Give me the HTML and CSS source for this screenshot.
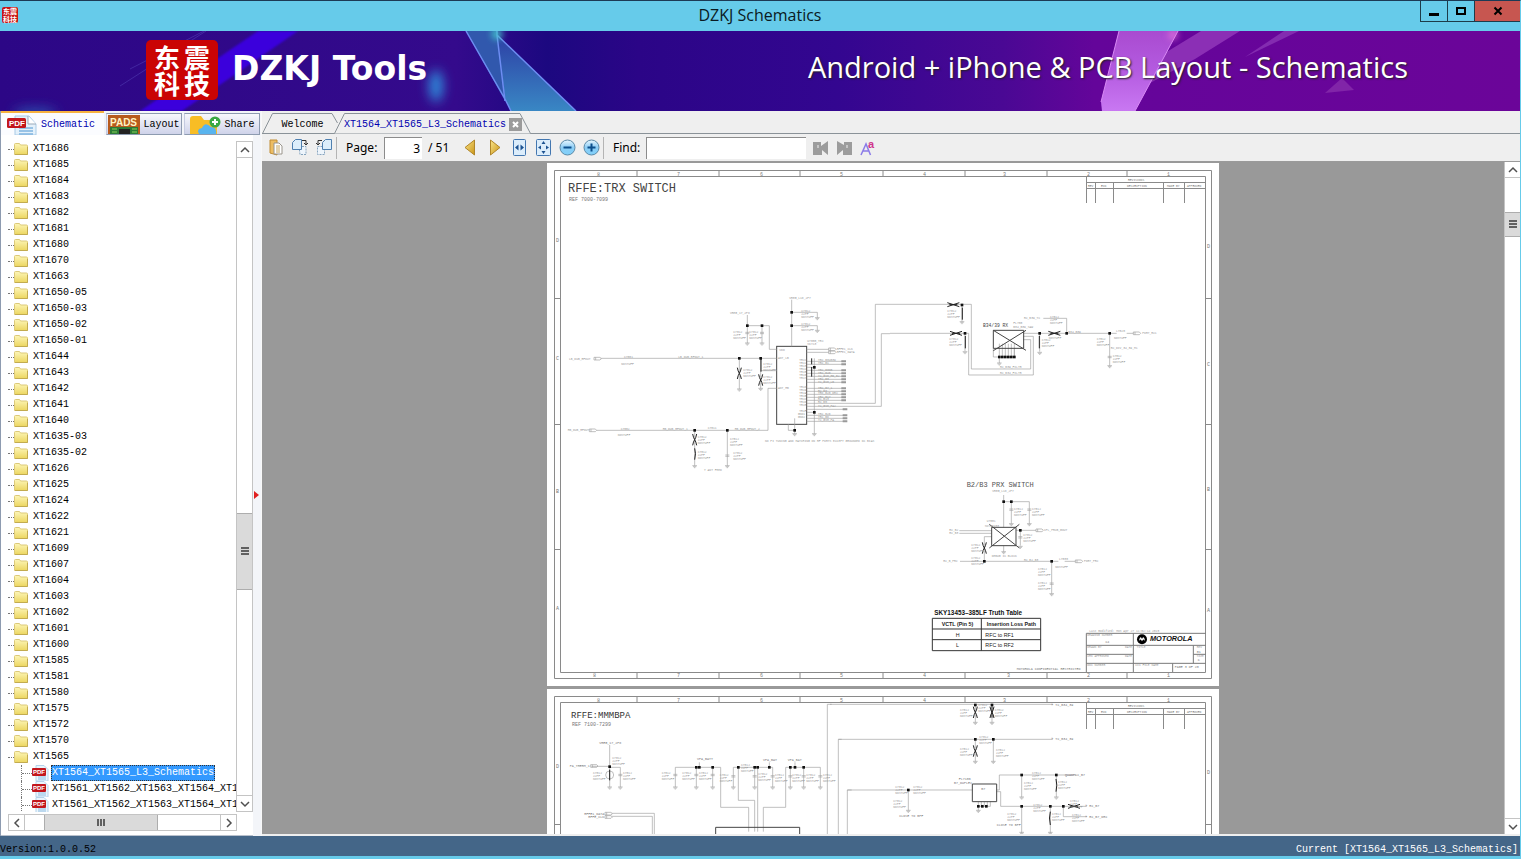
FILE: index.html
```html
<!DOCTYPE html>
<html lang="en">
<head>
<meta charset="utf-8">
<title>DZKJ Schematics</title>
<link rel="stylesheet" href="styles.css">
</head>
<body>
<svg class="defs" aria-hidden="true">
  <defs>
    <linearGradient id="fy" x1="0" y1="0" x2="0" y2="1"><stop offset="0" stop-color="#fdf6b8"/><stop offset="1" stop-color="#ecd660"/></linearGradient>
    <linearGradient id="gold" x1="0" y1="0" x2="1" y2="1"><stop offset="0" stop-color="#fbe58a"/><stop offset="1" stop-color="#c99416"/></linearGradient>
    <linearGradient id="sky" x1="0" y1="0" x2="0" y2="1"><stop offset="0" stop-color="#e9f7ff"/><stop offset=".5" stop-color="#8ccdf5"/><stop offset="1" stop-color="#7fd0fa"/></linearGradient>
    <symbol id="folder" viewBox="0 0 14 12"><path d="M.5 1.500q0-1 1-1h4l1 1.500h6q1 0 1 1V11.500H.5z" fill="url(#fy)" stroke="#dcc978"/><path d="M1 11.500H13.500V4" fill="none" stroke="#c2ab50"/></symbol>
    <symbol id="pdf" viewBox="0 0 17 16"><path d="M4 .5h8l4 4V16H4z" fill="#eaf5fd" stroke="#b5d3ea"/><path d="M6 12h8M6 14h8" stroke="#8dbce0"/><rect x="0" y="3" width="14" height="8" rx="1" fill="#c3161c"/><text x="1" y="9" font-family="Liberation Sans" font-weight="700" font-size="6" fill="#fff">PDF</text></symbol>
    <symbol id="up" viewBox="0 0 10 10"><path d="M1 7l4-4 4 4" fill="none" stroke="#505050" stroke-width="1.500"/></symbol>
    <symbol id="gnd" overflow="visible"><path d="M-7 0H7M-5 3H5M-2 6H2" class="w"/></symbol>
    <symbol id="cap" overflow="visible"><path d="M-6-2H6M-6 2H6" class="w"/></symbol>
    <symbol id="vx" overflow="visible"><path d="M-6-17Q-4-6 0 0Q4 6 6 17M6-17Q4-6 0 0Q-4 6-6 17" class="k"/></symbol>
    <symbol id="hx" overflow="visible"><path d="M-18-6Q0 0 18 6M-18 6Q0 0 18-6M-12 0H12" class="k"/></symbol>
    <symbol id="dot" overflow="visible"><rect x="-4" y="-4" width="8" height="8" fill="#111"/></symbol>
    <symbol id="note" overflow="visible"><text class="m">C7012</text><text class="m" y="9">22PF</text><text class="m" y="18">NOSTUFF</text></symbol>
    <symbol id="port" overflow="visible"><path d="M0-4H18L22 0L18 4H0zM5-4V4" class="w"/></symbol>
    <symbol id="frame" viewBox="0 0 672 523">
      <path class="f" d="M7.500 7.500H664.500V515.500H7.500zM13.500 13.500H658.500V509.500H13.500zM90 8V13M172 8V13M253 8V13M336 8V13M418 8V13M500 8V13M580 8V13M90 510V515M172 510V515M253 510V515M336 510V515M418 510V515M500 510V515M580 510V515M8 135.500H13M8 261.500H13M8 386.500H13M659 135.500H664M659 261.500H664M659 386.500H664"/>
      <path class="f" d="M539.500 13V40M539 19.500H658M539 25.500H658M548.500 19V40M566.500 19V40M616.500 19V40M637.500 19V40"/>
      <g class="z"><text x="50" y="13">8</text><text x="130" y="13">7</text><text x="213" y="13">6</text><text x="293" y="13">5</text><text x="376" y="13">4</text><text x="456" y="13">3</text><text x="540" y="13">2</text><text x="620" y="13">1</text>
      <text x="46" y="514">8</text><text x="130" y="514">7</text><text x="213" y="514">6</text><text x="293" y="514">5</text><text x="376" y="514">4</text><text x="460" y="514">3</text><text x="540" y="514">2</text><text x="620" y="514">1</text>
      <text x="9" y="79">D</text><text x="9" y="197">C</text><text x="9" y="330">B</text><text x="9" y="447">A</text><text x="660" y="85">D</text><text x="660" y="203">C</text><text x="660" y="328">B</text><text x="660" y="449">A</text></g>
      <g class="t3"><text x="581" y="18">REVISIONS</text><text x="541" y="24">REV</text><text x="554" y="24">ECN</text><text x="580" y="24">DESCRIPTION</text><text x="620" y="24">MADE BY</text><text x="640" y="24">APPROVED</text></g>
    </symbol>
  </defs>
</svg>

<header class="titlebar">
  <div class="appicon"><span>东震</span><span>科技</span></div>
  <h1>DZKJ Schematics</h1>
  <div class="winbtns">
    <button type="button" aria-label="Minimize"><svg width="12" height="12"><path d="M1 8h10v3H1z"/></svg></button>
    <button type="button" aria-label="Maximize"><svg width="12" height="12"><path d="M2 3h8v6H2z" fill="none" stroke="#000" stroke-width="2"/></svg></button>
    <button type="button" class="close" aria-label="Close"><svg width="10" height="10"><path d="M1.500 1.500l7 7M8.500 1.500l-7 7" stroke="#000" stroke-width="2"/></svg></button>
  </div>
</header>

<section class="banner">
  <svg class="art" viewBox="0 0 1520 80" preserveAspectRatio="none" aria-hidden="true">
    <defs><filter id="b" x="-300%" y="-200%" width="700%" height="500%"><feGaussianBlur stdDeviation="6"/></filter><filter id="b2" x="-100%" y="-100%" width="300%" height="300%"><feGaussianBlur stdDeviation="3"/></filter><filter id="b3"><feGaussianBlur stdDeviation="1"/></filter>
    <linearGradient id="bl" x1="0" y1="0" x2="0" y2="1"><stop offset="0" stop-color="#2d3fa5"/><stop offset="1" stop-color="#3987c4"/></linearGradient>
    <linearGradient id="pk" x1="0" y1="0" x2="0" y2="1"><stop offset="0" stop-color="#a94bd0"/><stop offset=".5" stop-color="#b45be0"/><stop offset="1" stop-color="#c978f2"/></linearGradient></defs>
    <path d="M258 0H298L182 80H140z" fill="#3a02dc" filter="url(#b3)"/>
    <path d="M206 0L120 55M204 0L130 38" stroke="#5746ba" opacity=".5"/>
    <ellipse cx="436" cy="55" rx="7" ry="16" fill="#2f8ddc" filter="url(#b)"/>
    <ellipse cx="35" cy="82" rx="22" ry="5" fill="#2b50ae" filter="url(#b)"/>
    <path d="M466 0H497L505 70z" fill="#3158ad"/><path d="M497 4L576 80H511L505 68z" fill="url(#bl)"/>
    <path d="M466 0L505 68L511 80M497 0V4L505 70M497 4L576 80" fill="none" stroke="#6d8df2" stroke-width="1.500"/>
    <circle cx="497" cy="3" r="6" fill="#43c7cd" opacity=".8" filter="url(#b2)"/>
    <path d="M1201 0H1240L1195 28L1150 52L1160 25z" fill="#8b2fb5"/><path d="M1284 0H1299L1245 26z" fill="#832bb0"/>
    <path d="M1119 0H1178L1135 80H1102L1101 71z" fill="url(#pk)"/>
    <path d="M1178 0L1135 80M1119 0L1101 71" stroke="#d98af5" fill="none"/>
    <circle cx="1173" cy="4" r="5" fill="#e474da" opacity=".7" filter="url(#b2)"/>
    <path d="M1342 47L1354 59L1325 62z" fill="#8125a8"/>
  </svg>
  <div class="logo"><span>东</span><span>震</span><span>科</span><span>技</span></div>
  <p class="brand">DZKJ Tools</p>
  <p class="slogan">Android + iPhone &amp; PCB Layout - Schematics</p>
</section>

<main class="work">
  <aside class="side">
    <nav class="sidetabs">
      <button type="button" class="on"><svg width="32" height="20" viewBox="0 0 32 20"><path d="M9 1h14l7 8v11H9z" fill="#e4f1fb" stroke="#a9cbe6"/><path d="M22 1v8h8" fill="#fff" stroke="#9ab"/><path d="M13 13h14M13 16h14M13 19h14" stroke="#7fb4e0" stroke-width="1.500"/><rect x="1" y="3" width="19" height="10" rx="1.500" fill="#c3161c"/><text x="3" y="11" font-family="Liberation Sans" font-weight="700" font-size="8" fill="#fff">PDF</text></svg>Schematic</button>
      <button type="button"><svg width="32" height="19" viewBox="0 0 32 19"><path d="M0 0H32V19H0z" fill="#b75a1d"/><path d="M2 12H30V19H2z" fill="#2b7a35"/><path d="M11 14h11v5H11z" fill="#222"/><path d="M4 14h5M4 17h5M24 14h5M24 17h5" stroke="#8ad05a"/><text x="2" y="11" font-family="Liberation Sans" font-weight="700" font-size="10" fill="#fff3c4">PADS</text></svg>Layout</button>
      <button type="button"><svg width="32" height="19" viewBox="0 0 32 19"><path d="M1 4q0-3 3-3h8l3 4h13v14H1z" fill="#f8bd25"/><path d="M10 19q-3-5 3-6q3-7 9-1q6 0 5 7z" fill="#59b4ee"/><circle cx="26" cy="7" r="5.500" fill="#3aa943"/><path d="M26 4v6M23 7h6" stroke="#fff" stroke-width="2"/></svg>Share</button>
    </nav>
    <div class="treebox">
      <div class="treerow">
        <ul class="tree">
          <li><svg><use href="#folder"/></svg>XT1686</li>
          <li><svg><use href="#folder"/></svg>XT1685</li>
          <li><svg><use href="#folder"/></svg>XT1684</li>
          <li><svg><use href="#folder"/></svg>XT1683</li>
          <li><svg><use href="#folder"/></svg>XT1682</li>
          <li><svg><use href="#folder"/></svg>XT1681</li>
          <li><svg><use href="#folder"/></svg>XT1680</li>
          <li><svg><use href="#folder"/></svg>XT1670</li>
          <li><svg><use href="#folder"/></svg>XT1663</li>
          <li><svg><use href="#folder"/></svg>XT1650-05</li>
          <li><svg><use href="#folder"/></svg>XT1650-03</li>
          <li><svg><use href="#folder"/></svg>XT1650-02</li>
          <li><svg><use href="#folder"/></svg>XT1650-01</li>
          <li><svg><use href="#folder"/></svg>XT1644</li>
          <li><svg><use href="#folder"/></svg>XT1643</li>
          <li><svg><use href="#folder"/></svg>XT1642</li>
          <li><svg><use href="#folder"/></svg>XT1641</li>
          <li><svg><use href="#folder"/></svg>XT1640</li>
          <li><svg><use href="#folder"/></svg>XT1635-03</li>
          <li><svg><use href="#folder"/></svg>XT1635-02</li>
          <li><svg><use href="#folder"/></svg>XT1626</li>
          <li><svg><use href="#folder"/></svg>XT1625</li>
          <li><svg><use href="#folder"/></svg>XT1624</li>
          <li><svg><use href="#folder"/></svg>XT1622</li>
          <li><svg><use href="#folder"/></svg>XT1621</li>
          <li><svg><use href="#folder"/></svg>XT1609</li>
          <li><svg><use href="#folder"/></svg>XT1607</li>
          <li><svg><use href="#folder"/></svg>XT1604</li>
          <li><svg><use href="#folder"/></svg>XT1603</li>
          <li><svg><use href="#folder"/></svg>XT1602</li>
          <li><svg><use href="#folder"/></svg>XT1601</li>
          <li><svg><use href="#folder"/></svg>XT1600</li>
          <li><svg><use href="#folder"/></svg>XT1585</li>
          <li><svg><use href="#folder"/></svg>XT1581</li>
          <li><svg><use href="#folder"/></svg>XT1580</li>
          <li><svg><use href="#folder"/></svg>XT1575</li>
          <li><svg><use href="#folder"/></svg>XT1572</li>
          <li><svg><use href="#folder"/></svg>XT1570</li>
          <li><svg><use href="#folder"/></svg>XT1565</li>
          <li class="leaf"><svg><use href="#pdf"/></svg><span class="sel">XT1564_XT1565_L3_Schematics</span></li>
          <li class="leaf"><svg><use href="#pdf"/></svg><span>XT1561_XT1562_XT1563_XT1564_XT1</span></li>
          <li class="leaf"><svg><use href="#pdf"/></svg><span>XT1561_XT1562_XT1563_XT1564_XT1</span></li>
        </ul>
        <div class="vbar">
          <button type="button" aria-label="Scroll up"><svg width="10" height="10"><use href="#up"/></svg></button>
          <div class="gap-a"></div><div class="thumb"><i></i></div><div class="gap-b"></div>
          <button type="button" class="dn" aria-label="Scroll down"><svg width="10" height="10"><use href="#up"/></svg></button>
        </div>
      </div>
      <div class="hbar">
        <button type="button" class="lf" aria-label="Scroll left"><svg width="10" height="10"><use href="#up"/></svg></button>
        <div class="hthumb"><i></i></div>
        <button type="button" class="rt" aria-label="Scroll right"><svg width="10" height="10"><use href="#up"/></svg></button>
      </div>
    </div>
    <svg class="grip" width="5" height="8" aria-hidden="true"><path d="M0 0l5 4-5 4z" fill="#e02020"/></svg>
  </aside>

  <section class="docs">
    <nav class="doctabs">
      <button type="button" class="welcome"><svg width="76" height="22" viewBox="0 0 76 22"><path d="M.5 21.500L10.500 1.500H70L75.500 11" fill="none" stroke="#8a9298"/></svg>Welcome</button>
      <div class="active"><svg width="198" height="22" viewBox="0 0 198 22"><path d="M.5 21.500L10.500 1.500H186L196.500 21.500" fill="#efefef" stroke="#8a9298"/></svg><button type="button">XT1564_XT1565_L3_Schematics</button><button type="button" class="x" aria-label="Close tab"><svg width="7" height="7"><path d="M1 1l5 5M6 1l-5 5" stroke="#fff" stroke-width="2"/></svg></button></div>
    </nav>
    <div class="toolbar">
      <button type="button" aria-label="Open"><svg width="16" height="17" viewBox="0 0 16 17"><path d="M2 1h7v15l-7-2z" fill="#edbd62" stroke="#c18c32"/><path d="M6 4h5l3 3v8H6z" fill="#fff" stroke="#9a958c"/><path d="M8 7h4M8 9h4M8 11h4M8 13h4" stroke="#c6a55f"/></svg></button>
      <button type="button" aria-label="Rotate right"><svg width="18" height="17" viewBox="0 0 18 17"><path d="M8 7.500h7v8H9z" fill="#eef5fc" stroke="#87a5bf" stroke-dasharray="2 1"/><path d="M1.500 3.500l3-3h6v10h-9z" fill="#dceefb" stroke="#4f80b0"/><path d="M11 1.500h4v4M13 4l2 2 2-2" fill="none" stroke="#333"/></svg></button>
      <button type="button" aria-label="Rotate left"><svg width="18" height="17" viewBox="0 0 18 17"><path d="M2.500 7.500h7v8h-7z" fill="#eef5fc" stroke="#87a5bf" stroke-dasharray="2 1"/><path d="M7.500 3.500l3-3h6v10h-9z" fill="#dceefb" stroke="#4f80b0"/><path d="M7 1.500H3v4M1 4l2 2 2-2" fill="none" stroke="#333"/></svg></button>
      <hr>
      <label for="pg" class="lp">Page:</label><input id="pg" class="pg" type="text" value="3"><span class="of">/ 51</span>
      <button type="button" class="arrow" aria-label="Previous page"><svg width="12" height="17"><path d="M10.500 1v15L1 8.500z" fill="url(#gold)" stroke="#b0862a"/></svg></button>
      <button type="button" class="arrow" aria-label="Next page"><svg width="12" height="17"><path d="M1.500 1v15L11 8.500z" fill="url(#gold)" stroke="#b0862a"/></svg></button>
      <button type="button" aria-label="Fit width"><svg width="13" height="17"><rect x=".5" y=".5" width="12" height="16" rx="1" fill="#dcedfb" stroke="#4377b0"/><path d="M2 8.500l3.500-3v6zM11 8.500l-3.500-3v6z" fill="#1d5391"/></svg></button>
      <button type="button" aria-label="Fit page"><svg width="15" height="17"><rect x=".5" y=".5" width="14" height="16" rx="1" fill="#dcedfb" stroke="#4377b0"/><path d="M7.500 2l2 3h-4zM7.500 15l2-3h-4zM2 8.500l3-2v4zM13 8.500l-3-2v4z" fill="#1d5391"/></svg></button>
      <button type="button" aria-label="Zoom out"><svg width="17" height="17"><circle cx="8.500" cy="8.500" r="7.500" fill="url(#sky)" stroke="#5b8aa8"/><path d="M4.500 8.500h8" stroke="#0d4f8c" stroke-width="2"/></svg></button>
      <button type="button" aria-label="Zoom in"><svg width="17" height="17"><circle cx="8.500" cy="8.500" r="7.500" fill="url(#sky)" stroke="#5b8aa8"/><path d="M4.500 8.500h8M8.500 4.500v8" stroke="#0d4f8c" stroke-width="2"/></svg></button>
      <hr>
      <label for="find" class="lf2">Find:</label><input id="find" class="find" type="text">
      <button type="button" aria-label="Find previous"><svg width="15" height="16"><path d="M0 2h8v4l7-5v14l-6-5v5H0z" fill="#9c9c9c"/><path d="M4 5h2v3H4z" fill="#c6c6c6"/></svg></button>
      <button type="button" aria-label="Find next"><svg width="15" height="16"><path d="M15 2H7v3L0 1v14l6-5v5h9z" fill="#9c9c9c"/><path d="M9 5h2v3H9z" fill="#c6c6c6"/></svg></button>
      <button type="button" aria-label="Match case"><svg width="16" height="20"><path d="M1 17L6 6l4.500 11M3 13h6" fill="none" stroke="#8b7be8" stroke-width="1.500"/><text x="8" y="10" font-family="Liberation Sans" font-weight="700" font-size="11" fill="#d0348c">a</text></svg></button>
    </div>

    <div class="viewer">
      <div class="pages">
        <svg class="sheet" viewBox="0 0 672 523" role="img" aria-label="RFFE: TRX switch schematic">
          <use href="#frame"/>
          <text x="21" y="29" class="h">RFFE:TRX SWITCH</text><text x="22" y="38" class="t5">REF 7000-7099</text>
          <g transform="translate(3 122) scale(.33333)">
            <rect x="680" y="184" width="90" height="234" class="d"/>
            <path class="w" d="M152 220H680M658 193H680M658 193V122H592V90M592 122V174M636 122V174M725 184V44M725 82H802V98M725 122H802V136M568 220V312M632 220V310M632 257H680M680 310H654V436H140M434 436V542M532 436V542M715 418V436H734V446M734 400V436M793 220V446M770 355H976V58H1020M770 364H994V146H1020M770 193H836M770 202H836M770 229H880M770 238H880M770 247H793M770 256H880M770 265H880M770 274H880M770 283H880M770 292H880M770 310H880M770 319H880M770 328H880M770 337H880M770 346H880M770 373H890M770 382H793M770 391H890M770 400H890M770 409H890"/>
            <path class="k" d="M633 222V260M434 490Q439 505 434 524M785 220V238M785 246V275"/>
            <g><use href="#dot" x="592" y="122"/><use href="#dot" x="636" y="122"/><use href="#dot" x="725" y="82"/><use href="#dot" x="725" y="122"/><use href="#dot" x="568" y="220"/><use href="#dot" x="632" y="220"/><use href="#dot" x="793" y="247"/><use href="#dot" x="793" y="382"/><use href="#dot" x="434" y="436"/><use href="#dot" x="532" y="436"/><use href="#dot" x="734" y="436"/></g>
            <use href="#gnd" x="592" y="174"/><use href="#gnd" x="636" y="174"/><use href="#gnd" x="802" y="98"/><use href="#gnd" x="802" y="136"/><use href="#gnd" x="568" y="312"/><use href="#gnd" x="632" y="310"/><use href="#gnd" x="434" y="542"/><use href="#gnd" x="532" y="542"/><use href="#gnd" x="734" y="446"/><use href="#gnd" x="793" y="446"/>
            <use href="#cap" x="592" y="144"/><use href="#cap" x="636" y="144"/><use href="#cap" x="532" y="512"/>
            <use href="#vx" x="568" y="265"/><use href="#vx" x="632" y="285"/><use href="#vx" x="434" y="464"/>
            <use href="#port" x="132" y="221"/><use href="#port" x="118" y="436"/><use href="#port" x="836" y="193"/><use href="#port" x="836" y="202"/>
            <g class="m"><text x="57" y="224">LB_DUB_RFOUT</text><text x="53" y="439">HB_DUB_RFOUT</text><text x="385" y="218">LB_DUB_RFOUT_1</text><text x="338" y="434">HB_DUB_RFOUT_1</text><text x="554" y="434">HB_DUB_RFOUT_2</text><text x="222" y="218">C7001</text><text x="214" y="239">NOSTUFF</text><text x="212" y="434">C7002</text><text x="203" y="453">NOSTUFF</text><text x="540" y="86">VREG_17_2P8</text><text x="718" y="41">VREG_L18_2P7</text><text x="645" y="472">NO PI TUNING AND MATCHING ON RF PORTS EXCEPT GROUNDED DC BIAS</text><text x="462" y="557">T ANT FEED</text><text x="473" y="432">C7011</text>
            <text x="772" y="170">U7000_TRX</text><text x="772" y="179">SKY13</text><text x="860" y="194">RFFE1_CLK</text><text x="860" y="204">RFFE1_DATA</text><text x="804" y="229">TRX_B34B39</text><text x="804" y="238">TRX_B1</text><text x="804" y="257">TRX_B38B</text><text x="804" y="266">TRX_B40</text><text x="804" y="275">TX_GSM_HB_B2</text><text x="804" y="284">TRX_B3</text><text x="804" y="293">TX_GSM_LB</text><text x="804" y="311">TRX_B7_1</text><text x="804" y="320">RX_B8</text><text x="804" y="328">TRX_B20_DRX</text><text x="804" y="338">TRX_B17</text><text x="804" y="346">RX_B13</text><text x="804" y="355">RX_B5</text><text x="804" y="367">TX_GSM_PA2</text><text x="804" y="390">TRX_B26</text><text x="804" y="399">TRX_B8</text><text x="804" y="408">TX_GSM_PA</text></g>
            <g class="m"><text x="688" y="197">VDD</text><text x="684" y="222">ANT_LB</text><text x="684" y="312">ANT_HB</text><text x="748" y="229">TRX1</text><text x="748" y="238">TRX2</text><text x="748" y="247">TRX3</text><text x="748" y="256">TRX4</text><text x="748" y="265">TRX5</text><text x="748" y="274">TRX6</text><text x="748" y="283">TRX7</text><text x="748" y="310">TRX8</text><text x="748" y="319">TRX9</text><text x="748" y="328">TRXA</text><text x="748" y="337">TRXB</text><text x="748" y="346">TRXC</text><text x="748" y="355">TRXD</text><text x="748" y="364">TRXE</text><text x="748" y="382">TRXF</text><text x="744" y="391">GND1</text><text x="744" y="400">GND2</text></g>
            <use href="#note" x="550" y="144"/><use href="#note" x="598" y="144"/><use href="#note" x="754" y="80"/><use href="#note" x="754" y="120"/><use href="#note" x="443" y="458"/><use href="#note" x="443" y="504"/><use href="#note" x="540" y="464"/><use href="#note" x="550" y="508"/><use href="#note" x="580" y="258"/><use href="#note" x="640" y="240"/><use href="#note" x="640" y="280"/>
            <path class="pins" d="M874 229h14M874 238h14M874 256h14M874 265h14M874 274h14M874 283h14M874 292h14M874 310h14M874 319h14M874 328h14M874 337h14M874 346h14M878 373h14M878 391h14M878 400h14M878 409h14"/>
          </g>
          <g transform="translate(323 122) scale(.33333)">
            <path class="w" d="M60 58H304V252H482V164H460M60 145H296V270H490V154H460M276 58V110M285 145V198M460 145H740M509 145V200M520 100H590V145M719 145V242M770 145H790M370 190V216H433V190M388 176V234M397 176V216M406 176V216M415 176V216M424 176V216M433 176V216"/>
            <path class="d" d="M370 136H461V190H370zM370 136L468 196M370 197L468 136"/>
            <path class="k" d="M277 68V104M286 153V190M508 153V190"/>
            <use href="#hx" x="250" y="59"/><use href="#hx" x="258" y="145"/><use href="#hx" x="553" y="145"/>
            <use href="#dot" x="276" y="60"/><use href="#dot" x="285" y="145"/><use href="#dot" x="509" y="145"/><use href="#dot" x="590" y="145"/><use href="#dot" x="719" y="145"/><use href="#dot" x="388" y="216"/><use href="#dot" x="397" y="216"/><use href="#dot" x="406" y="216"/><use href="#dot" x="415" y="216"/><use href="#dot" x="424" y="216"/><use href="#dot" x="433" y="216"/>
            <use href="#gnd" x="276" y="110"/><use href="#gnd" x="285" y="200"/><use href="#gnd" x="509" y="202"/><use href="#gnd" x="719" y="242"/><use href="#gnd" x="388" y="234"/><use href="#cap" x="719" y="216"/>
            <use href="#port" x="790" y="145"/>
            <text x="339" y="127" class="t5 big">B34/39 RX</text>
            <g class="m"><text x="390" y="249">RX_B39_FILTR</text><text x="390" y="268">RX_B34_FILTR</text><text x="462" y="103">RX_B39_TX</text><text x="595" y="143">B34_B39</text><text x="817" y="148">PORT_RX1</text><text x="722" y="193">RX_DIV_34_39_M1</text><text x="738" y="140">L7020</text><text x="732" y="161">NOSTUFF</text><text x="430" y="118">FL700</text><text x="430" y="129">B34_B39_SAW</text><text x="536" y="161">NOSTUFF</text></g>
            <use href="#note" x="232" y="82"/><use href="#note" x="238" y="166"/><use href="#note" x="515" y="168"/><use href="#note" x="680" y="164"/><use href="#note" x="728" y="216"/><use href="#note" x="540" y="98"/>
          </g>
          <g transform="translate(363 312) scale(.33333)">
            <text x="170" y="36" class="t7">B2/B3 PRX SWITCH</text>
            <path class="w" d="M281 60V157M281 80H358V146M304 80V146M148 167H245M148 175H245M223 259V185H245M318 166H378M331 166V212M150 259H445M464 259H496M425 259V356M281 212V230"/>
            <path class="d" d="M245 157H318V212H245zM238 148L328 219M328 148L238 219"/>
            <use href="#vx" x="223" y="219"/><use href="#dot" x="281" y="80"/><use href="#dot" x="304" y="80"/><use href="#dot" x="331" y="166"/><use href="#dot" x="223" y="259"/><use href="#dot" x="425" y="259"/>
            <use href="#gnd" x="304" y="146"/><use href="#gnd" x="358" y="146"/><use href="#gnd" x="281" y="230"/><use href="#gnd" x="331" y="214"/><use href="#gnd" x="425" y="356"/><use href="#cap" x="304" y="104"/><use href="#cap" x="358" y="104"/><use href="#cap" x="331" y="187"/><use href="#cap" x="425" y="326"/><use href="#port" x="378" y="166"/><use href="#port" x="496" y="259"/>
            <g class="m"><text x="247" y="52">VREG_L18_2P7</text><text x="118" y="169">RX_B2</text><text x="118" y="178">RX_B3</text><text x="100" y="262">RX_B_PRX</text><text x="402" y="169">CPL_PRXB_GOUT</text><text x="522" y="262">PORT_PRX</text><text x="245" y="247">DEBUG IC BLOCK</text><text x="342" y="258">RX_B2_B3</text><text x="447" y="254">L7030</text><text x="436" y="278">NOSTUFF</text><text x="230" y="142">U7001</text><text x="224" y="156">SKY13453</text></g>
            <use href="#note" x="312" y="106"/><use href="#note" x="366" y="106"/><use href="#note" x="340" y="184"/><use href="#note" x="184" y="214"/><use href="#note" x="184" y="252"/><use href="#note" x="384" y="284"/><use href="#note" x="384" y="328"/>
            <text x="73" y="419" class="tt">SKY13453–385LF Truth Table</text>
            <path class="box" d="M67 430H392V527H67zM67 462H392M67 494H392M214 430V527"/>
            <g class="tb"><text x="95" y="453" font-weight="700">VCTL (Pin 5)</text><text x="230" y="453" font-weight="700">Insertion Loss Path</text><text x="137" y="485">H</text><text x="226" y="485">RFC to RF1</text><text x="138" y="517">L</text><text x="226" y="517">RFC to RF2</text></g>
            <path class="f3" d="M529 475H887M529 475V591M670 475V591M529 511H887M529 538H670M529 565H887M850 511V565M850 538H887M788 565V591"/>
            <circle cx="696" cy="493" r="15" fill="#000"/><path d="M686 500Q691 478 696 492Q701 478 706 500Q701 488 696 499Q691 488 686 500" fill="#fff"/>
            <text x="720" y="499" class="moto">MOTOROLA</text>
            <g class="m"><text x="538" y="471">Last modified: Mon Apr 27 11:02:14 2015</text><text x="532" y="484">DRAWING NUMBER</text><text x="532" y="520">DRAWN BY</text><text x="645" y="520">DATE</text><text x="532" y="547">CHK APPROVED</text><text x="645" y="547">DATE</text><text x="532" y="574">DOC NUMBER</text><text x="680" y="520">TITLE</text><text x="676" y="574">CIC FILE NAME</text><text x="860" y="520">REV</text><text x="860" y="547">SIZE</text></g>
            <g class="m2"><text x="586" y="503">X4</text><text x="860" y="533">01</text><text x="863" y="559">C</text><text x="794" y="580">PAGE 3 OF 20</text><text x="320" y="584">MOTOROLA CONFIDENTIAL RESTRICTED</text></g>
          </g>
        </svg>
        <svg class="sheet" viewBox="0 0 672 523" role="img" aria-label="RFFE: MMMBPA schematic">
          <use href="#frame"/>
          <text x="24" y="29" class="h2">RFFE:MMMBPA</text><text x="25" y="37" class="t5">REF 7100-7299</text>
          <g transform="translate(-2 -4) scale(.33333)">
            <path class="w" d="M194 180V306M140 244H194M194 247H226V306M391 306V247H527V367H611V440M463 247V232M454 247V306M503 247V306M565 306V247H683V306M580 247V346H629V440M629 247V306M638 247V440M673 247V232M655 440V367H722V247H826V306M736 247V306M776 247V306M750 247V232M200 385H328V460M200 394H322V460M847 460V58H860M880 460V163H890M907 460V315H920"/>
            <path class="d" d="M512 460V427H764V460"/><circle cx="194" cy="270" r="12" class="w"/><path class="k" d="M194 254V286"/>
            <use href="#dot" x="194" y="245"/><use href="#dot" x="454" y="247"/><use href="#dot" x="463" y="247"/><use href="#dot" x="503" y="247"/><use href="#dot" x="580" y="247"/><use href="#dot" x="629" y="247"/><use href="#dot" x="638" y="247"/><use href="#dot" x="673" y="247"/><use href="#dot" x="736" y="247"/><use href="#dot" x="750" y="247"/><use href="#dot" x="776" y="247"/>
            <g><use href="#gnd" x="194" y="306"/><use href="#gnd" x="226" y="306"/><use href="#gnd" x="391" y="306"/><use href="#gnd" x="454" y="306"/><use href="#gnd" x="503" y="306"/><use href="#gnd" x="565" y="306"/><use href="#gnd" x="629" y="306"/><use href="#gnd" x="683" y="306"/><use href="#gnd" x="736" y="306"/><use href="#gnd" x="776" y="306"/><use href="#gnd" x="826" y="306"/></g>
            <g><use href="#cap" x="226" y="270"/><use href="#cap" x="391" y="270"/><use href="#cap" x="454" y="270"/><use href="#cap" x="503" y="270"/><use href="#cap" x="565" y="274"/><use href="#cap" x="629" y="274"/><use href="#cap" x="683" y="274"/><use href="#cap" x="736" y="274"/><use href="#cap" x="776" y="274"/><use href="#cap" x="826" y="274"/></g>
            <use href="#port" x="137" y="243"/><use href="#port" x="180" y="386"/><use href="#port" x="180" y="396"/>
            <g class="m2"><text x="163" y="177">VREG_17_2P8</text><text x="74" y="245">PA_THERM_1</text><text x="456" y="224">VPA_BATT</text><text x="654" y="228">VPA_BAT</text><text x="728" y="228">VPA_BAT</text><text x="118" y="389">RFFE1_DATA</text><text x="130" y="398">RFFE_CLK</text></g>
            <g><use href="#note" x="202" y="222"/><use href="#note" x="144" y="268"/><use href="#note" x="234" y="268"/><use href="#note" x="350" y="268"/><use href="#note" x="412" y="268"/><use href="#note" x="462" y="268"/><use href="#note" x="524" y="274"/><use href="#note" x="640" y="270"/><use href="#note" x="690" y="274"/><use href="#note" x="742" y="274"/><use href="#note" x="784" y="274"/><use href="#note" x="834" y="274"/><use href="#note" x="588" y="244"/></g>
          </g>
          <g transform="translate(283 -4) scale(.33333)">
            <path class="w" d="M0 58H668M25 163H668M436 58V112M486 58V112M436 163V229M490 163V229M52 315H427M235 315V376M500 315H508V270H740M500 320H512V364H770M575 270V336M679 270V336M575 364V444M661 364V444M700 364V395H770M445 350V376M445 364H481M454 350V364M463 350V364M472 350V364M481 350V364"/>
            <path class="d" d="M427 297H500V350H427z"/><path class="k" d="M678 282Q683 300 678 320M661 380Q656 398 661 420M486 64V98"/>
            <use href="#vx" x="436" y="82"/><use href="#vx" x="486" y="82"/><use href="#vx" x="436" y="198"/><use href="#hx" x="732" y="364"/>
            <g><use href="#dot" x="436" y="60"/><use href="#dot" x="486" y="60"/><use href="#dot" x="436" y="163"/><use href="#dot" x="490" y="163"/><use href="#dot" x="235" y="315"/><use href="#dot" x="575" y="270"/><use href="#dot" x="679" y="270"/><use href="#dot" x="575" y="364"/><use href="#dot" x="661" y="364"/><use href="#dot" x="700" y="364"/><use href="#dot" x="445" y="364"/><use href="#dot" x="457" y="364"/><use href="#dot" x="469" y="364"/></g>
            <g><use href="#gnd" x="436" y="112"/><use href="#gnd" x="486" y="112"/><use href="#gnd" x="436" y="229"/><use href="#gnd" x="490" y="229"/><use href="#gnd" x="235" y="376"/><use href="#gnd" x="445" y="376"/><use href="#gnd" x="575" y="336"/><use href="#gnd" x="679" y="336"/><use href="#gnd" x="575" y="442"/><use href="#gnd" x="661" y="442"/></g>
            <g class="m2"><text x="664" y="62">» TX_B34_39</text><text x="664" y="166">» TX_B34_39</text><text x="454" y="314">B7</text><text x="705" y="273">QUADPLX_B7</text><text x="766" y="367">» RX_B7</text><text x="766" y="398">» RX_B7_DRX</text><text x="208" y="395">CLOSE TO BPF</text><text x="500" y="422">CLOSE TO BPF</text><text x="386" y="285">FL7106</text><text x="372" y="298">B7_DUPLEX</text></g>
            <g><use href="#note" x="390" y="78"/><use href="#note" x="494" y="78"/><use href="#note" x="445" y="64"/><use href="#note" x="390" y="194"/><use href="#note" x="498" y="198"/><use href="#note" x="448" y="160"/><use href="#note" x="196" y="310"/><use href="#note" x="250" y="310"/><use href="#note" x="190" y="350"/><use href="#note" x="582" y="296"/><use href="#note" x="606" y="266"/><use href="#note" x="684" y="294"/><use href="#note" x="610" y="362"/><use href="#note" x="532" y="390"/><use href="#note" x="666" y="390"/><use href="#note" x="720" y="350"/><use href="#note" x="726" y="394"/></g>
          </g>
        </svg>
      </div>
      <div class="vbar main">
        <button type="button" aria-label="Page up"><svg width="10" height="10"><use href="#up"/></svg></button>
        <div class="gap-a"></div><div class="thumb"><i></i></div><div class="gap-b"></div>
        <button type="button" class="dn" aria-label="Page down"><svg width="10" height="10"><use href="#up"/></svg></button>
      </div>
    </div>
  </section>
</main>
<footer class="status"><span>Version:1.0.0.52</span><span class="cur">Current [XT1564_XT1565_L3_Schematics]</span></footer>
</body>
</html>
```
FILE: styles.css
```css
* { box-sizing: border-box; }
html, body { height: 100%; }
body { margin: 0; display: flex; flex-direction: column; overflow: hidden; background: #efefef; border-top: 1px solid #1c3a55; border-right: 1px solid #66cbea; border-bottom: 3px solid #66cbea; font-family: "Liberation Mono", "Noto Sans CJK SC", monospace; font-size: 10px; color: #000; }
button { border: 0; padding: 0; margin: 0; background: none; font: inherit; color: inherit; display: flex; align-items: center; justify-content: center; }
h1, p, ul { margin: 0; padding: 0; }
svg { display: block; flex: none; }
.defs { position: absolute; width: 0; height: 0; }

.titlebar { flex: none; height: 30px; background: #66cbea; display: grid; grid-template-columns: 1fr auto 1fr; }
.titlebar h1 { font: 400 16px/29px "Open Sans", sans-serif; color: #0a1a22; }
.appicon { margin: 6px 0 0 2px; width: 16px; height: 16px; border-radius: 2px; background: #c81414; color: #fff; font: 700 7px/7px "Noto Sans CJK SC", sans-serif; text-align: center; padding-top: 1px; display: grid; }
.winbtns { justify-self: end; display: flex; height: 21px; border: 1px solid #1d3c4a; border-top: 0; border-right: 0; }
.winbtns button { width: 27px; border-right: 1px solid #1d3c4a; }
.winbtns .close { width: 45px; border: 0; background: #c75650; }

.banner { flex: none; height: 80px; position: relative; overflow: hidden; display: flex; align-items: center; padding: 0 112px 0 146px; background: linear-gradient(90deg, #2c0786 0, #340a8c 30%, #1c0880 36%, #2b0587 42%, #330690 55%, #4a0894 66%, #64059a 72%, #6b0599 100%); color: #fff; }
.art { position: absolute; inset: 0; width: 100%; height: 100%; }
.logo { position: relative; width: 72px; height: 60px; margin-top: -2px; border-radius: 5px; background: #ca0404; display: grid; grid-template-columns: 30px 30px; grid-auto-rows: 26px; justify-content: center; align-content: center; justify-items: center; font: 700 26px/26px "Noto Sans CJK SC", sans-serif; }
.brand { position: relative; margin: -4px 0 0 14px; font: 700 33px/40px "DejaVu Sans", sans-serif; white-space: nowrap; }
.slogan { position: relative; margin: -8px 0 0 auto; white-space: nowrap; font: 400 29px/40px "Open Sans", sans-serif; text-shadow: 1px 1px 2px #222; }

.work { flex: 1; min-height: 0; display: flex; }
.side { flex: none; width: 262px; position: relative; display: flex; flex-direction: column; border-left: 1px solid #8d9bb0; border-right: 1px solid #f8f8f8; background: #f3f5f9; }
.sidetabs { flex: none; display: flex; gap: 2px; height: 24px; font-size: 10px; }
.sidetabs button { width: 76px; gap: 3px; margin-top: 2px; height: 22px; border: 1px solid #8d9bb0; border-left-color: #c5cbe0; background: linear-gradient(#f7f8fc, #cfd3ea); align-items: flex-end; line-height: 18px; overflow: hidden; }
.sidetabs .on { width: 103px; margin: 0; height: 24px; border: 0; border-top: 2px solid #f7b240; background: #fbfcff; color: #0000b0; justify-content: flex-start; padding-left: 5px; line-height: 20px; }
.treebox { flex: 1; min-height: 0; display: flex; flex-direction: column; gap: 2px; margin-right: 8px; padding: 6px 0 4px 7px; background: #fff; border-bottom: 1px solid #b8c0cc; }
.treerow { flex: 1; min-height: 0; display: flex; }
.tree { flex: 1; min-width: 0; overflow: hidden; list-style: none; }
.tree li { display: flex; align-items: center; height: 16px; line-height: 18px; white-space: nowrap; }
.tree li::before { content: ""; flex: none; width: 6px; border-top: 1px dotted #777; }
.tree li svg { width: 14px; height: 12px; margin-right: 5px; }
.tree .leaf { margin-left: 13px; border-left: 1px dotted #777; }
.tree .leaf::before { width: 10px; }
.tree .leaf svg { width: 17px; height: 16px; margin-right: 2px; }
.tree .leaf span { padding: 0 1px; line-height: 16px; }
.tree .leaf .sel { background: #3399ff; color: #fff; outline: 1px dotted #333; outline-offset: -1px; }
.vbar { flex: none; width: 17px; display: flex; flex-direction: column; border: 1px solid #c4c4c4; background: #fff; }
.vbar button { flex: none; height: 16px; border-bottom: 1px solid #c4c4c4; }
.vbar .dn { border-bottom: 0; border-top: 1px solid #c4c4c4; }
.vbar .dn svg { transform: rotate(180deg); }
.gap-a { flex: 358; }
.gap-b { flex: 207; }
.thumb { flex: 76; display: flex; align-items: center; justify-content: center; background: #dadada; border: solid #adadad; border-width: 1px 0; }
.thumb i { width: 8px; height: 8px; background: repeating-linear-gradient(#606060 0 2px, transparent 2px 3px); }
.hbar { flex: none; display: grid; grid-template-columns: 16px 19fr 113fr 62fr 16px; width: 229px; height: 17px; border: 1px solid #c4c4c4; }
.hbar .lf { border-right: 1px solid #c4c4c4; }
.hbar .lf svg { transform: rotate(-90deg); }
.hbar .rt { grid-column: 5; border-left: 1px solid #c4c4c4; }
.hbar .rt svg { transform: rotate(90deg); }
.hthumb { grid-column: 3; background: #dadada; border: solid #adadad; border-width: 0 1px; display: flex; align-items: center; justify-content: center; }
.hthumb i { width: 8px; height: 7px; background: repeating-linear-gradient(90deg, #606060 0 2px, transparent 2px 3px); }
.grip { position: absolute; right: 2px; top: 380px; }

.docs { flex: 1; min-width: 0; display: flex; flex-direction: column; padding-bottom: 2px; }
.doctabs { flex: none; display: flex; height: 23px; padding-top: 1px; border-bottom: 1px solid #8a9298; }
.doctabs > * { position: relative; height: 22px; }
.doctabs > * > svg { position: absolute; left: 0; top: 0; }
.welcome { width: 72px; padding: 2px 0 0 9px; }
.active { width: 198px; display: flex; align-items: center; gap: 3px; padding: 2px 0 0 10px; color: #0000b0; }
.active button { position: relative; }
.active .x { width: 13px; height: 13px; background: #9b9b9b; }
.toolbar { flex: none; height: 28px; display: flex; align-items: center; padding-left: 2px; font: 12px/20px "Noto Sans", sans-serif; border-bottom: 1px solid #9a9a9a; }
.toolbar button { width: 24px; height: 24px; }
.toolbar .arrow { width: 25px; }
.toolbar hr { width: 1px; height: 22px; margin: 0; border: 0; background: #b4b4b4; }
.toolbar input { height: 22px; border: solid #8c8c8c; border-width: 1px 0 0 1px; background: #fff; font: inherit; padding: 0 2px; }
.lp { width: 47px; padding-left: 9px; }
.pg { width: 38px; text-align: right; }
.of { width: 35px; padding-left: 6px; }
.lf2 { width: 42px; padding-left: 9px; }
.find { width: 160px; margin-right: 2px; }
.viewer { flex: 1; min-height: 0; display: flex; background: #999; }
.pages { flex: 1; min-width: 0; overflow: hidden; display: flex; flex-direction: column; align-items: center; gap: 3px; padding-top: 1px; }
.sheet { width: 672px; height: 523px; background: #fff; font-family: "Liberation Mono", monospace; fill: #555; }
.main { width: 16px; border-width: 0 0 0 1px; }
.main .gap-a { flex: 34; }
.main .thumb { flex: 23; }
.main .gap-b { flex: 585; }

.w { fill: none; stroke: #a0a0a0; stroke-width: 2; }
.d { fill: none; stroke: #444; stroke-width: 3; }
.k { fill: none; stroke: #222; stroke-width: 3; }
.f { fill: none; stroke: #8a8a8a; stroke-width: 1; }
.f3 { fill: none; stroke: #777; stroke-width: 3; }
.pins { fill: none; stroke: #999; stroke-width: 6; }
.box { fill: none; stroke: #333; stroke-width: 3; }
.m { font-size: 9px; fill: #999; }
.m2 { font-size: 10px; fill: #777; }
.z { font-size: 5px; fill: #777; }
.t3 { font-size: 3px; fill: #777; }
.t5 { font-size: 5px; fill: #777; }
.big { font-size: 14px; fill: #444; }
.t7 { font-size: 21px; fill: #555; }
.h { font-size: 12px; fill: #444; }
.h2 { font-size: 9px; fill: #333; }
.tt { font: 700 19px "Liberation Sans", sans-serif; fill: #111; }
.tb { font: 16px "Liberation Sans", sans-serif; fill: #222; }
.moto { font: italic 700 22px "Liberation Sans", sans-serif; fill: #111; }

.status { flex: none; height: 20px; display: flex; align-items: flex-end; justify-content: space-between; padding-right: 2px; background: #446688; line-height: 13px; }
.cur { color: #fff; }
```
